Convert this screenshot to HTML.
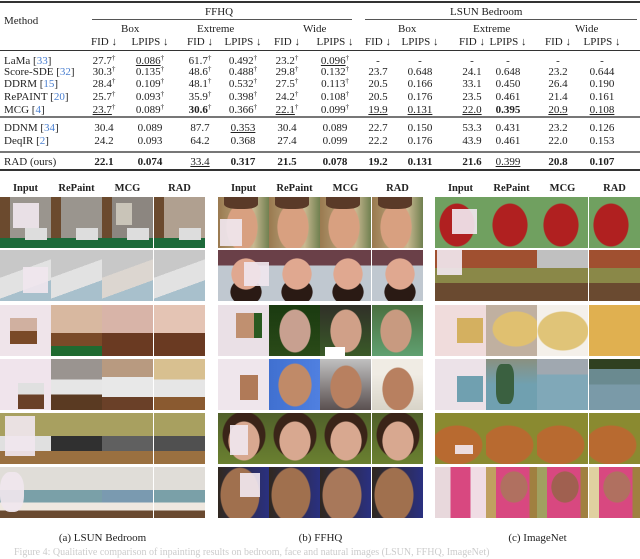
<!DOCTYPE html>
<html><head><meta charset="utf-8"><style>
*{margin:0;padding:0;box-sizing:border-box}
body{width:640px;height:553px;background:#fff;position:relative;overflow:hidden;font-family:"Liberation Serif",serif;color:#222;font-size:11px}
.t{position:absolute;white-space:nowrap;line-height:12px}
.c{position:absolute;width:60px;text-align:center;white-space:nowrap;line-height:12px}
.r{position:absolute;left:0;width:640px;background:#333}
.b{color:#4a7fd0}
u{text-decoration:underline}
sup{font-size:7px;line-height:0;vertical-align:4px}
.cell{position:absolute;width:51px;height:51px;overflow:hidden}
.m{position:absolute;background:rgba(240,230,238,.92)}
.lbl{position:absolute;font-weight:bold;font-size:10.5px;width:51px;text-align:center;top:183px}
.cap{position:absolute;top:532px;font-size:11px;width:205px;text-align:center}
</style></head><body>
<div class="r" style="top:1px;height:1.5px"></div>
<div class="t" style="left:4px;top:15px">Method</div>
<div class="t" style="left:205px;top:6px">FFHQ</div>
<div class="t" style="left:450px;top:6px">LSUN Bedroom</div>
<div class="r" style="top:19px;left:92px;width:260px;height:.8px;background:#555"></div>
<div class="r" style="top:19px;left:365px;width:272px;height:.8px;background:#555"></div>
<div class="t" style="left:121px;top:23px">Box</div>
<div class="t" style="left:197px;top:23px">Extreme</div>
<div class="t" style="left:303px;top:23px">Wide</div>
<div class="t" style="left:398px;top:23px">Box</div>
<div class="t" style="left:473px;top:23px">Extreme</div>
<div class="t" style="left:575px;top:23px">Wide</div>
<div id="h"></div>
<div class="r" style="top:50px;height:.8px"></div>
<div class="r" style="top:116px;height:1.5px;background:#777"></div>
<div class="r" style="top:151px;height:1.5px;background:#777"></div>
<div class="r" style="top:169px;height:1.5px"></div>

<!-- header row FID/LPIPS -->
<div class="c" style="left:74px;top:36px">FID ↓</div><div class="c" style="left:120px;top:36px">LPIPS ↓</div>
<div class="c" style="left:170px;top:36px">FID ↓</div><div class="c" style="left:213px;top:36px">LPIPS ↓</div>
<div class="c" style="left:257px;top:36px">FID ↓</div><div class="c" style="left:305px;top:36px">LPIPS ↓</div>
<div class="c" style="left:348px;top:36px">FID ↓</div><div class="c" style="left:390px;top:36px">LPIPS ↓</div>
<div class="c" style="left:442px;top:36px">FID ↓</div><div class="c" style="left:478px;top:36px">LPIPS ↓</div>
<div class="c" style="left:528px;top:36px">FID ↓</div><div class="c" style="left:572px;top:36px">LPIPS ↓</div>

<!-- rows -->
<div class="t" style="left:4px;top:55px">LaMa [<span class="b">33</span>]</div>
<div class="c" style="left:74px;top:55px">27.7<sup>†</sup></div><div class="c" style="left:120px;top:55px"><u>0.086</u><sup>†</sup></div><div class="c" style="left:170px;top:55px">61.7<sup>†</sup></div><div class="c" style="left:213px;top:55px">0.492<sup>†</sup></div><div class="c" style="left:257px;top:55px">23.2<sup>†</sup></div><div class="c" style="left:305px;top:55px"><u>0.096</u><sup>†</sup></div>
<div class="c" style="left:348px;top:55px">-</div><div class="c" style="left:390px;top:55px">-</div><div class="c" style="left:442px;top:55px">-</div><div class="c" style="left:478px;top:55px">-</div><div class="c" style="left:528px;top:55px">-</div><div class="c" style="left:572px;top:55px">-</div>

<div class="t" style="left:4px;top:66px">Score-SDE [<span class="b">32</span>]</div>
<div class="c" style="left:74px;top:66px">30.3<sup>†</sup></div><div class="c" style="left:120px;top:66px">0.135<sup>†</sup></div><div class="c" style="left:170px;top:66px">48.6<sup>†</sup></div><div class="c" style="left:213px;top:66px">0.488<sup>†</sup></div><div class="c" style="left:257px;top:66px">29.8<sup>†</sup></div><div class="c" style="left:305px;top:66px">0.132<sup>†</sup></div>
<div class="c" style="left:348px;top:66px">23.7</div><div class="c" style="left:390px;top:66px">0.648</div><div class="c" style="left:442px;top:66px">24.1</div><div class="c" style="left:478px;top:66px">0.648</div><div class="c" style="left:528px;top:66px">23.2</div><div class="c" style="left:572px;top:66px">0.644</div>

<div class="t" style="left:4px;top:78px">DDRM [<span class="b">15</span>]</div>
<div class="c" style="left:74px;top:78px">28.4<sup>†</sup></div><div class="c" style="left:120px;top:78px">0.109<sup>†</sup></div><div class="c" style="left:170px;top:78px">48.1<sup>†</sup></div><div class="c" style="left:213px;top:78px">0.532<sup>†</sup></div><div class="c" style="left:257px;top:78px">27.5<sup>†</sup></div><div class="c" style="left:305px;top:78px">0.113<sup>†</sup></div>
<div class="c" style="left:348px;top:78px">20.5</div><div class="c" style="left:390px;top:78px">0.166</div><div class="c" style="left:442px;top:78px">33.1</div><div class="c" style="left:478px;top:78px">0.450</div><div class="c" style="left:528px;top:78px">26.4</div><div class="c" style="left:572px;top:78px">0.190</div>

<div class="t" style="left:4px;top:91px">RePAINT [<span class="b">20</span>]</div>
<div class="c" style="left:74px;top:91px">25.7<sup>†</sup></div><div class="c" style="left:120px;top:91px">0.093<sup>†</sup></div><div class="c" style="left:170px;top:91px">35.9<sup>†</sup></div><div class="c" style="left:213px;top:91px">0.398<sup>†</sup></div><div class="c" style="left:257px;top:91px">24.2<sup>†</sup></div><div class="c" style="left:305px;top:91px">0.108<sup>†</sup></div>
<div class="c" style="left:348px;top:91px">20.5</div><div class="c" style="left:390px;top:91px">0.176</div><div class="c" style="left:442px;top:91px">23.5</div><div class="c" style="left:478px;top:91px">0.461</div><div class="c" style="left:528px;top:91px">21.4</div><div class="c" style="left:572px;top:91px">0.161</div>

<div class="t" style="left:4px;top:104px">MCG [<span class="b">4</span>]</div>
<div class="c" style="left:74px;top:104px"><u>23.7</u><sup>†</sup></div><div class="c" style="left:120px;top:104px">0.089<sup>†</sup></div><div class="c" style="left:170px;top:104px"><b>30.6</b><sup>†</sup></div><div class="c" style="left:213px;top:104px">0.366<sup>†</sup></div><div class="c" style="left:257px;top:104px"><u>22.1</u><sup>†</sup></div><div class="c" style="left:305px;top:104px">0.099<sup>†</sup></div>
<div class="c" style="left:348px;top:104px"><u>19.9</u></div><div class="c" style="left:390px;top:104px"><u>0.131</u></div><div class="c" style="left:442px;top:104px"><u>22.0</u></div><div class="c" style="left:478px;top:104px"><b>0.395</b></div><div class="c" style="left:528px;top:104px"><u>20.9</u></div><div class="c" style="left:572px;top:104px"><u>0.108</u></div>

<div class="t" style="left:4px;top:122px">DDNM [<span class="b">34</span>]</div>
<div class="c" style="left:74px;top:122px">30.4</div><div class="c" style="left:120px;top:122px">0.089</div><div class="c" style="left:170px;top:122px">87.7</div><div class="c" style="left:213px;top:122px"><u>0.353</u></div><div class="c" style="left:257px;top:122px">30.4</div><div class="c" style="left:305px;top:122px">0.089</div>
<div class="c" style="left:348px;top:122px">22.7</div><div class="c" style="left:390px;top:122px">0.150</div><div class="c" style="left:442px;top:122px">53.3</div><div class="c" style="left:478px;top:122px">0.431</div><div class="c" style="left:528px;top:122px">23.2</div><div class="c" style="left:572px;top:122px">0.126</div>

<div class="t" style="left:4px;top:135px">DeqIR [<span class="b">2</span>]</div>
<div class="c" style="left:74px;top:135px">24.2</div><div class="c" style="left:120px;top:135px">0.093</div><div class="c" style="left:170px;top:135px">64.2</div><div class="c" style="left:213px;top:135px">0.368</div><div class="c" style="left:257px;top:135px">27.4</div><div class="c" style="left:305px;top:135px">0.099</div>
<div class="c" style="left:348px;top:135px">22.2</div><div class="c" style="left:390px;top:135px">0.176</div><div class="c" style="left:442px;top:135px">43.9</div><div class="c" style="left:478px;top:135px">0.461</div><div class="c" style="left:528px;top:135px">22.0</div><div class="c" style="left:572px;top:135px">0.153</div>

<div class="t" style="left:4px;top:156px">RAD (ours)</div>
<div class="c" style="left:74px;top:156px"><b>22.1</b></div><div class="c" style="left:120px;top:156px"><b>0.074</b></div><div class="c" style="left:170px;top:156px"><u>33.4</u></div><div class="c" style="left:213px;top:156px"><b>0.317</b></div><div class="c" style="left:257px;top:156px"><b>21.5</b></div><div class="c" style="left:305px;top:156px"><b>0.078</b></div>
<div class="c" style="left:348px;top:156px"><b>19.2</b></div><div class="c" style="left:390px;top:156px"><b>0.131</b></div><div class="c" style="left:442px;top:156px"><b>21.6</b></div><div class="c" style="left:478px;top:156px"><u>0.399</u></div><div class="c" style="left:528px;top:156px"><b>20.8</b></div><div class="c" style="left:572px;top:156px"><b>0.107</b></div>

<!-- labels -->
<div class="lbl" style="left:0">Input</div><div class="lbl" style="left:51px">RePaint</div><div class="lbl" style="left:102px">MCG</div><div class="lbl" style="left:154px">RAD</div>
<div class="lbl" style="left:218px">Input</div><div class="lbl" style="left:269px">RePaint</div><div class="lbl" style="left:320px">MCG</div><div class="lbl" style="left:372px">RAD</div>
<div class="lbl" style="left:435px">Input</div><div class="lbl" style="left:486px">RePaint</div><div class="lbl" style="left:537px">MCG</div><div class="lbl" style="left:589px">RAD</div>

<div id="grid">
<!-- Bedroom -->
<div class="cell" style="left:0;top:197px;background:linear-gradient(90deg,#6b4a2e 0 20%,#9a958e 20% 100%);"><div style="position:absolute;left:0;right:0;bottom:0;height:10px;background:#1d6a3a"></div><div style="position:absolute;right:4px;bottom:8px;width:22px;height:12px;background:#ddd"></div><div class="m" style="left:13px;top:6px;width:26px;height:25px"></div></div>
<div class="cell" style="left:51px;top:197px;background:linear-gradient(90deg,#6b4a2e 0 20%,#9a958e 20% 100%);"><div style="position:absolute;left:0;right:0;bottom:0;height:10px;background:#1d6a3a"></div><div style="position:absolute;right:4px;bottom:8px;width:22px;height:12px;background:#ddd"></div></div>
<div class="cell" style="left:102px;top:197px;background:linear-gradient(90deg,#6b4a2e 0 20%,#8c8680 20% 100%);"><div style="position:absolute;left:0;right:0;bottom:0;height:10px;background:#1d6a3a"></div><div style="position:absolute;left:14px;top:6px;width:16px;height:22px;background:#c9c4b8"></div><div style="position:absolute;right:4px;bottom:8px;width:22px;height:12px;background:#ddd"></div></div>
<div class="cell" style="left:154px;top:197px;background:linear-gradient(90deg,#6b4a2e 0 20%,#b0a090 20% 100%);"><div style="position:absolute;left:0;right:0;bottom:0;height:10px;background:#1d6a3a"></div><div style="position:absolute;right:4px;bottom:8px;width:22px;height:12px;background:#ddd"></div></div>

<div class="cell" style="left:0;top:250px;background:linear-gradient(160deg,#c8c8c8 0 40%,#e2e2e2 40% 70%,#a8c0cc 70%)"><div class="m" style="left:23px;top:17px;width:25px;height:26px"></div></div>
<div class="cell" style="left:51px;top:250px;background:linear-gradient(160deg,#c8c8c8 0 40%,#e2e2e2 40% 70%,#a8c0cc 70%)"></div>
<div class="cell" style="left:102px;top:250px;background:linear-gradient(160deg,#c8c8c8 0 40%,#dcd6d0 40% 70%,#a8c0cc 70%)"></div>
<div class="cell" style="left:154px;top:250px;background:linear-gradient(160deg,#c8c8c8 0 40%,#e2e2e2 40% 70%,#a8c0cc 70%)"></div>

<div class="cell" style="left:0;top:305px;background:#efe4ea"><div style="position:absolute;left:10px;top:13px;width:27px;height:26px;background:linear-gradient(#d0b0a0 50%,#7a4a28 50%)"></div></div>
<div class="cell" style="left:51px;top:305px;background:linear-gradient(#d8b8a0 0 55%,#7a4a28 55% 80%,#1f6a30 80%)"></div>
<div class="cell" style="left:102px;top:305px;background:linear-gradient(#d8b4a8 0 55%,#6a3a22 55%)"></div>
<div class="cell" style="left:154px;top:305px;background:linear-gradient(#e4c4b4 0 55%,#6a3a22 55%)"></div>

<div class="cell" style="left:0;top:359px;background:#f0e4ec"><div style="position:absolute;left:18px;top:24px;width:26px;height:26px;background:linear-gradient(#e0e0e0 45%,#6a4028 45%)"></div></div>
<div class="cell" style="left:51px;top:359px;background:linear-gradient(#9a9490 0 40%,#e6e6e6 40% 70%,#5a3a22 70%)"></div>
<div class="cell" style="left:102px;top:359px;background:linear-gradient(#b89a80 0 35%,#e8e8e8 35% 75%,#6a4028 75%)"></div>
<div class="cell" style="left:154px;top:359px;background:linear-gradient(#d8c090 0 40%,#e6e6e6 40% 75%,#8a5a30 75%)"></div>

<div class="cell" style="left:0;top:413px;background:linear-gradient(#a8a060 0 45%,#e0e0e0 45% 75%,#9a7040 75%)"><div class="m" style="left:5px;top:3px;width:30px;height:40px"></div></div>
<div class="cell" style="left:51px;top:413px;background:linear-gradient(#a8a060 0 45%,#303030 45% 75%,#9a7040 75%)"></div>
<div class="cell" style="left:102px;top:413px;background:linear-gradient(#a8a060 0 45%,#606060 45% 75%,#9a7040 75%)"></div>
<div class="cell" style="left:154px;top:413px;background:linear-gradient(#a8a060 0 45%,#505050 45% 75%,#9a7040 75%)"></div>

<div class="cell" style="left:0;top:467px;background:linear-gradient(#e0ddd8 0 45%,#7aa0a8 45% 70%,#efe8e0 70% 85%,#6a4a30 85%)"><div class="m" style="left:0;top:5px;width:24px;height:40px;border-radius:40%"></div></div>
<div class="cell" style="left:51px;top:467px;background:linear-gradient(#e0ddd8 0 45%,#7aa0a8 45% 70%,#efe8e0 70% 85%,#6a4a30 85%)"></div>
<div class="cell" style="left:102px;top:467px;background:linear-gradient(#e0ddd8 0 45%,#7a9ab0 45% 70%,#efe8e0 70% 85%,#6a4a30 85%)"></div>
<div class="cell" style="left:154px;top:467px;background:linear-gradient(#e0ddd8 0 45%,#7aa0a8 45% 70%,#efe8e0 70% 85%,#6a4a30 85%)"></div>

<!-- FFHQ -->
<div class="cell" style="left:218px;top:197px;background:radial-gradient(ellipse 16px 24px at 24px 30px,#d8a080 95%,transparent),linear-gradient(90deg,#9a7a50,#c8b890 70%,#708050)"><div style="position:absolute;left:6px;top:0;width:34px;height:12px;background:#5a3a28;border-radius:0 0 40% 40%"></div><div class="m" style="left:2px;top:22px;width:22px;height:27px"></div></div>
<div class="cell" style="left:269px;top:197px;background:radial-gradient(ellipse 16px 24px at 24px 30px,#d8a080 95%,transparent),linear-gradient(90deg,#9a7a50,#c8b890 70%,#708050)"><div style="position:absolute;left:6px;top:0;width:34px;height:12px;background:#5a3a28;border-radius:0 0 40% 40%"></div></div>
<div class="cell" style="left:320px;top:197px;background:radial-gradient(ellipse 16px 24px at 24px 30px,#d8a080 95%,transparent),linear-gradient(90deg,#9a7a50,#c8b890 70%,#708050)"><div style="position:absolute;left:6px;top:0;width:34px;height:12px;background:#5a3a28;border-radius:0 0 40% 40%"></div></div>
<div class="cell" style="left:372px;top:197px;background:radial-gradient(ellipse 16px 24px at 24px 30px,#d8a080 95%,transparent),linear-gradient(90deg,#9a7a50,#c8b890 70%,#708050)"><div style="position:absolute;left:6px;top:0;width:34px;height:12px;background:#5a3a28;border-radius:0 0 40% 40%"></div></div>

<div class="cell" style="left:218px;top:250px;background:radial-gradient(ellipse 15px 16px at 28px 24px,#e0a890 95%,transparent),radial-gradient(ellipse 16px 14px at 28px 42px,#2a1a14 95%,transparent),linear-gradient(#6a4048 0 30%,#c0c8d0 30%)"><div class="m" style="left:26px;top:12px;width:25px;height:24px"></div></div>
<div class="cell" style="left:269px;top:250px;background:radial-gradient(ellipse 15px 16px at 28px 24px,#e0a890 95%,transparent),radial-gradient(ellipse 16px 14px at 28px 42px,#2a1a14 95%,transparent),linear-gradient(#6a4048 0 30%,#c0c8d0 30%)"></div>
<div class="cell" style="left:320px;top:250px;background:radial-gradient(ellipse 15px 16px at 28px 24px,#e0a890 95%,transparent),radial-gradient(ellipse 16px 14px at 28px 42px,#2a1a14 95%,transparent),linear-gradient(#6a4048 0 30%,#c0c8d0 30%)"></div>
<div class="cell" style="left:372px;top:250px;background:radial-gradient(ellipse 15px 16px at 28px 24px,#e0a890 95%,transparent),radial-gradient(ellipse 16px 14px at 28px 42px,#2a1a14 95%,transparent),linear-gradient(#6a4048 0 30%,#c0c8d0 30%)"></div>

<div class="cell" style="left:218px;top:305px;background:#eae0e6"><div style="position:absolute;left:18px;top:8px;width:26px;height:25px;background:linear-gradient(90deg,#c09070 70%,#2a5a20 70%)"></div></div>
<div class="cell" style="left:269px;top:305px;background:radial-gradient(ellipse 16px 22px at 26px 26px,#c8a090 95%,transparent),linear-gradient(#1a3a10,#2a4a18)"></div>
<div class="cell" style="left:320px;top:305px;background:radial-gradient(ellipse 16px 22px at 26px 26px,#d0a088 95%,transparent),linear-gradient(#303028,#3a5a28)"><div style="position:absolute;left:5px;top:42px;width:20px;height:9px;background:#fff"></div></div>
<div class="cell" style="left:372px;top:305px;background:radial-gradient(ellipse 16px 22px at 24px 26px,#c89a80 95%,transparent),linear-gradient(#4a7040,#60a070)"></div>

<div class="cell" style="left:218px;top:359px;background:#efe6ec"><div style="position:absolute;left:22px;top:16px;width:18px;height:25px;background:#b07a58"></div></div>
<div class="cell" style="left:269px;top:359px;background:radial-gradient(ellipse 17px 22px at 26px 26px,#c08a68 95%,transparent),linear-gradient(90deg,#4070d0,#5080e0)"></div>
<div class="cell" style="left:320px;top:359px;background:radial-gradient(ellipse 16px 22px at 26px 28px,#b88060 95%,transparent),linear-gradient(#c0c0c0,#5a5050)"></div>
<div class="cell" style="left:372px;top:359px;background:radial-gradient(ellipse 16px 22px at 26px 30px,#b88060 95%,transparent),linear-gradient(#f0ece4 0 30%,#d8d4c8)"></div>

<div class="cell" style="left:218px;top:413px;background:radial-gradient(ellipse 16px 20px at 26px 28px,#d8a890 95%,transparent),radial-gradient(ellipse 22px 24px at 26px 22px,#3a2418 95%,transparent),linear-gradient(#50602a,#6a8030)"><div class="m" style="left:12px;top:12px;width:18px;height:30px"></div></div>
<div class="cell" style="left:269px;top:413px;background:radial-gradient(ellipse 16px 20px at 26px 28px,#d8a890 95%,transparent),radial-gradient(ellipse 22px 24px at 26px 22px,#3a2418 95%,transparent),linear-gradient(#50602a,#6a8030)"></div>
<div class="cell" style="left:320px;top:413px;background:radial-gradient(ellipse 16px 20px at 26px 28px,#d8a890 95%,transparent),radial-gradient(ellipse 22px 24px at 26px 22px,#3a2418 95%,transparent),linear-gradient(#50602a,#6a8030)"></div>
<div class="cell" style="left:372px;top:413px;background:radial-gradient(ellipse 16px 20px at 26px 28px,#d8a890 95%,transparent),radial-gradient(ellipse 22px 24px at 26px 22px,#3a2418 95%,transparent),linear-gradient(#50602a,#6a8030)"></div>

<div class="cell" style="left:218px;top:467px;background:radial-gradient(ellipse 20px 28px at 22px 28px,#a0704e 95%,transparent),linear-gradient(90deg,#302820,#2a3080)"><div class="m" style="left:22px;top:6px;width:20px;height:24px"></div></div>
<div class="cell" style="left:269px;top:467px;background:radial-gradient(ellipse 20px 28px at 22px 28px,#a0704e 95%,transparent),linear-gradient(90deg,#302820,#2a3080)"></div>
<div class="cell" style="left:320px;top:467px;background:radial-gradient(ellipse 20px 28px at 22px 28px,#a8785a 95%,transparent),linear-gradient(90deg,#302820,#2a3080)"></div>
<div class="cell" style="left:372px;top:467px;background:radial-gradient(ellipse 20px 28px at 22px 28px,#a0704e 95%,transparent),linear-gradient(90deg,#302820,#2a3080)"></div>

<!-- ImageNet -->
<div class="cell" style="left:435px;top:197px;background:radial-gradient(ellipse 18px 22px at 22px 28px,#b02020 95%,transparent),#70a060"><div class="m" style="left:17px;top:12px;width:25px;height:25px"></div></div>
<div class="cell" style="left:486px;top:197px;background:radial-gradient(ellipse 18px 22px at 24px 28px,#b02020 95%,transparent),#70a060"></div>
<div class="cell" style="left:537px;top:197px;background:radial-gradient(ellipse 18px 22px at 24px 28px,#b02020 95%,transparent),#70a060"></div>
<div class="cell" style="left:589px;top:197px;background:radial-gradient(ellipse 18px 22px at 22px 28px,#b02020 95%,transparent),#70a060"></div>

<div class="cell" style="left:435px;top:250px;background:linear-gradient(#a05030 0 35%,#8a8848 35% 65%,#6a4a30 65%)"><div class="m" style="left:2px;top:0;width:25px;height:25px"></div></div>
<div class="cell" style="left:486px;top:250px;background:linear-gradient(#a05030 0 35%,#8a8848 35% 65%,#6a4a30 65%)"></div>
<div class="cell" style="left:537px;top:250px;background:linear-gradient(#c0c0c0 0 35%,#8a8848 35% 65%,#6a4a30 65%)"></div>
<div class="cell" style="left:589px;top:250px;background:linear-gradient(#a05030 0 35%,#8a8848 35% 65%,#6a4a30 65%)"></div>

<div class="cell" style="left:435px;top:305px;background:#f0dcdc"><div style="position:absolute;left:22px;top:13px;width:26px;height:25px;background:#d4b060"></div></div>
<div class="cell" style="left:486px;top:305px;background:radial-gradient(ellipse 24px 18px at 30px 24px,#e0c070 95%,transparent),#c0b0a0"></div>
<div class="cell" style="left:537px;top:305px;background:radial-gradient(ellipse 26px 20px at 26px 26px,#e0c478 95%,transparent),#f4f0ea"></div>
<div class="cell" style="left:589px;top:305px;background:#e0b050"></div>

<div class="cell" style="left:435px;top:359px;background:#ece2e8"><div style="position:absolute;left:22px;top:17px;width:26px;height:26px;background:#70a0b0"></div></div>
<div class="cell" style="left:486px;top:359px;background:linear-gradient(#8a9080,#70a0b0 50%)"><div style="position:absolute;left:10px;top:5px;width:18px;height:40px;background:#3a6040;border-radius:30%"></div></div>
<div class="cell" style="left:537px;top:359px;background:linear-gradient(#a0a8b0 0 30%,#80a8b8 30%)"></div>
<div class="cell" style="left:589px;top:359px;background:linear-gradient(#304020 0 20%,#6a8a90 20% 50%,#7a9aa8 50%)"></div>

<div class="cell" style="left:435px;top:413px;background:radial-gradient(ellipse 26px 20px at 22px 32px,#b86a30 95%,transparent),#8a8a30"><div class="m" style="left:20px;top:32px;width:18px;height:9px"></div></div>
<div class="cell" style="left:486px;top:413px;background:radial-gradient(ellipse 26px 20px at 22px 32px,#b86a30 95%,transparent),#8a8a30"></div>
<div class="cell" style="left:537px;top:413px;background:radial-gradient(ellipse 26px 20px at 22px 32px,#b86a30 95%,transparent),#8a8a30"></div>
<div class="cell" style="left:589px;top:413px;background:radial-gradient(ellipse 26px 20px at 22px 32px,#b86a30 95%,transparent),#8a8a30"></div>

<div class="cell" style="left:435px;top:467px;background:linear-gradient(90deg,#e8d8dc 30%,#d84880 30% 70%,#f0dce4 70%)"></div>
<div class="cell" style="left:486px;top:467px;background:radial-gradient(ellipse 14px 16px at 28px 20px,#b07060 95%,transparent),linear-gradient(90deg,#c0a060 20%,#d84880 20% 85%,#a08040 85%)"></div>
<div class="cell" style="left:537px;top:467px;background:radial-gradient(ellipse 14px 16px at 28px 20px,#a06050 95%,transparent),linear-gradient(90deg,#a0a060 20%,#d84880 20% 85%,#a08040 85%)"></div>
<div class="cell" style="left:589px;top:467px;background:radial-gradient(ellipse 14px 16px at 28px 20px,#b07060 95%,transparent),linear-gradient(90deg,#e0d0a0 20%,#d84880 20% 85%,#a08040 85%)"></div>
</div>

<div class="cap" style="left:0">(a) LSUN Bedroom</div>
<div class="cap" style="left:218px">(b) FFHQ</div>
<div class="cap" style="left:435px">(c) ImageNet</div>
<div class="t" style="left:14px;top:547px;color:#ccc;font-size:10px">Figure 4: Qualitative comparison of inpainting results on bedroom, face and natural images (LSUN, FFHQ, ImageNet)</div>
</body></html>
